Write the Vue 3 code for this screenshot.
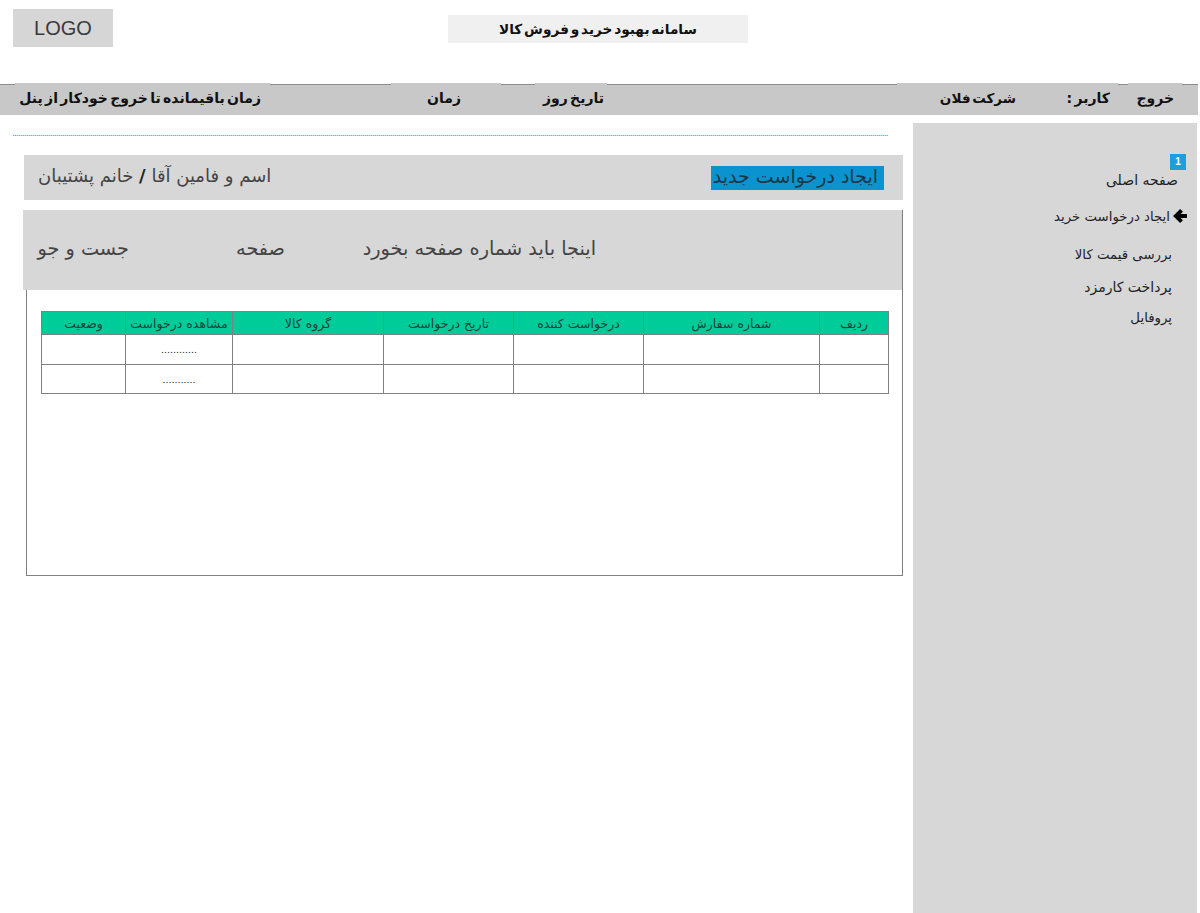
<template>
  <div class="page">
    <header class="top">
      <div class="logo">LOGO</div>
      <div class="title">سامانه بهبود خرید و فروش کالا</div>
    </header>

    <nav class="nav">
      <span class="navItem exit">خروج</span>
      <span class="navItem user">کاربر :</span>
      <span class="navItem company">شرکت فلان</span>
      <span class="navItem date">تاریخ روز</span>
      <span class="navItem time">زمان</span>
      <span class="navItem remain">زمان باقیمانده تا خروج خودکار از پنل</span>
    </nav>

    <div class="body">
      <aside class="side">
        <div class="badge">1</div>
        <div class="sideItem home">صفحه اصلی</div>
        <div class="sideItem active">
          <svg class="arrow" width="14" height="14" viewBox="0 0 14 14">
            <path d="M7.2 0 L10 2.8 L7.6 5 H14 V9 H7.6 L10 11.2 L7.2 14 L0 7 Z" fill="#000" />
          </svg>
          <span>ایجاد درخواست خرید</span>
        </div>
        <div class="sideItem" :class="{ pay: i == 1 }" v-for="(item, i) in menu" :key="item">{{ item }}</div>
      </aside>

      <main class="main">
        <div class="dots"></div>
        <div class="userBar">
          <span class="newBtn">ایجاد درخواست جدید</span>
          <span class="agent">اسم و فامین آقا <b>/</b> خانم پشتیبان</span>
        </div>

        <section class="panel">
          <div class="searchBar">
            <span class="pageHint">اینجا باید شماره صفحه بخورد</span>
            <span class="pageLabel">صفحه</span>
            <span class="searchLabel">جست و جو</span>
          </div>

          <table class="grid">
            <colgroup>
              <col v-for="(w, i) in widths" :key="i" :style="{ width: w + 'px' }" />
            </colgroup>
            <thead>
              <tr>
                <th v-for="h in heads" :key="h">{{ h }}</th>
              </tr>
            </thead>
            <tbody>
              <tr v-for="row in rows" :key="row">
                <td v-for="(h, i) in heads" :key="h" :class="{ more: i == 5 }">
                  {{ i == 5 ? row : "" }}
                </td>
              </tr>
            </tbody>
          </table>
        </section>
      </main>
    </div>
  </div>
</template>

<script setup>
const menu = ["بررسی قیمت کالا", "پرداخت کارمزد", "پروفایل"];
const heads = ["ردیف", "شماره سفارش", "درخواست کننده", "تاریخ درخواست", "گروه کالا", "مشاهده درخواست", "وضعیت"];
const widths = [69, 176, 130, 130, 151, 107, 84];
const rows = ["............", "..........."];
</script>

<style>
html,
body {
  margin: 0;
  background: #fff;
}
</style>

<style scoped>
.page {
  width: 1200px;
  height: 913px;
  overflow: hidden;
  font-family: "DejaVu Sans", sans-serif;
  color: #222;
}

.top {
  height: 84px;
  display: flex;
  align-items: flex-start;
  padding-left: 13px;
  box-sizing: border-box;
}
.logo {
  width: 100px;
  height: 38px;
  margin-top: 9px;
  background: #d6d6d6;
  font: 20px/38px "Liberation Sans", sans-serif;
  color: #3a3a3a;
  text-align: center;
}
.title {
  width: 300px;
  height: 28px;
  margin: 15px 0 0 335px;
  background: #f0f0f0;
  direction: rtl;
  text-align: center;
  font-size: 13.7px;
  font-weight: bold;
  line-height: 28px;
  word-spacing: -3px;
  color: #111;
}

.nav {
  height: 30px;
  width: 1198px;
  border-top: 1px solid #8c8c8c;
  background: #c8c8c8;
  direction: rtl;
  display: flex;
  font-size: 14px;
  font-weight: bold;
  word-spacing: -2.5px;
  color: #111;
  white-space: nowrap;
}
.navItem {
  flex-shrink: 0;
  height: 31px;
  margin-top: -2px;
  line-height: 31px;
  background: #c8c8c8;
  box-sizing: border-box;
}
.exit {
  width: 54px;
  margin-right: 16px;
  padding-right: 8px;
}
.user {
  width: 76px;
  margin-right: 10px;
  padding-right: 8px;
}
.company {
  width: 145px;
  padding-right: 26px;
  font-size: 13.5px;
  word-spacing: -3px;
}
.date {
  width: 72px;
  margin-right: 290px;
  padding-right: 3px;
}
.time {
  width: 110px;
  margin-right: 34px;
  padding-right: 40px;
}
.remain {
  width: 255px;
  margin-right: 121px;
  padding-right: 9px;
}

.body {
  display: flex;
  flex-direction: row-reverse;
  justify-content: flex-end;
  width: 1197px;
}
.side {
  width: 284px;
  height: 790px;
  margin-top: 8px;
  margin-left: 10px;
  background: #d7d7d7;
  box-sizing: border-box;
  padding: 31px 0 0;
  direction: rtl;
  flex-shrink: 0;
  font-size: 13.3px;
}
.badge {
  width: 16px;
  height: 16px;
  margin-right: 11px;
  background: #1e9fdc;
  color: #fff;
  font: bold 10px/16px "Liberation Sans", sans-serif;
  text-align: center;
}
.sideItem {
  padding-right: 25px;
  line-height: 20px;
  height: 20px;
  margin-top: 12px;
  color: #222;
}
.home {
  margin-top: 0;
  padding-right: 19px;
  font-size: 14px;
}
.active {
  display: flex;
  align-items: center;
  margin-top: 17px;
  padding-right: 10px;
  margin-bottom: 18px;
}
.pay {
  font-size: 14px;
  margin-top: 12px;
}
.sideItem:last-child {
  margin-top: 11px;
}
.arrow {
  flex-shrink: 0;
  margin-left: 3px;
  margin-top: -2px;
}

.main {
  width: 890px;
  padding-left: 13px;
  box-sizing: content-box;
}
.dots {
  width: 875px;
  height: 1px;
  margin-top: 20px;
  background: repeating-linear-gradient(90deg, #00e0d0 0 1px, #a8f2ec 1px 2px);
}
.userBar {
  width: 879px;
  height: 45px;
  margin: 19px 0 0 11px;
  background: #d7d7d7;
  direction: rtl;
  display: flex;
  justify-content: space-between;
  align-items: center;
  font-size: 18px;
  color: #444;
}
.newBtn {
  margin-right: 19px;
  padding-right: 6px;
  width: 173px;
  height: 24px;
  line-height: 20px;
  font-size: 19px;
  background: #0b93cf;
  color: #17394a;
  white-space: nowrap;
  box-sizing: border-box;
}
.agent {
  margin-left: 14px;
  margin-bottom: 4px;
  white-space: nowrap;
}
.agent b {
  color: #222;
}

.panel {
  width: 875px;
  height: 365px;
  margin: 10px 0 0 13px;
  border: 1px solid #808080;
  border-top: 0;
}
.searchBar {
  height: 80px;
  margin-left: -4px;
  padding-bottom: 3px;
  box-sizing: border-box;
  background: #d7d7d7;
  direction: rtl;
  display: flex;
  align-items: center;
  font-size: 19.3px;
  color: #444;
  white-space: nowrap;
}
.pageHint {
  margin-right: 306px;
  width: 235px;
}
.pageLabel {
  margin-right: 76px;
  width: 50px;
}
.searchLabel {
  margin-right: 106px;
}

.grid {
  margin: 21px 0 0 14px;
  width: 847px;
  direction: rtl;
  table-layout: fixed;
  border-collapse: collapse;
  font-size: 12.5px;
}
.grid th,
.grid td {
  border: 1px solid #808080;
  text-align: center;
  padding: 0;
}
.grid th {
  height: 22px;
  background: #00cc99;
  color: #24423a;
  font-weight: normal;
}
.grid td {
  height: 29px;
  background: #fff;
}
.grid tr:nth-child(2) td {
  height: 28px;
}
.more {
  font-size: 9.5px;
  color: #222;
}
</style>
